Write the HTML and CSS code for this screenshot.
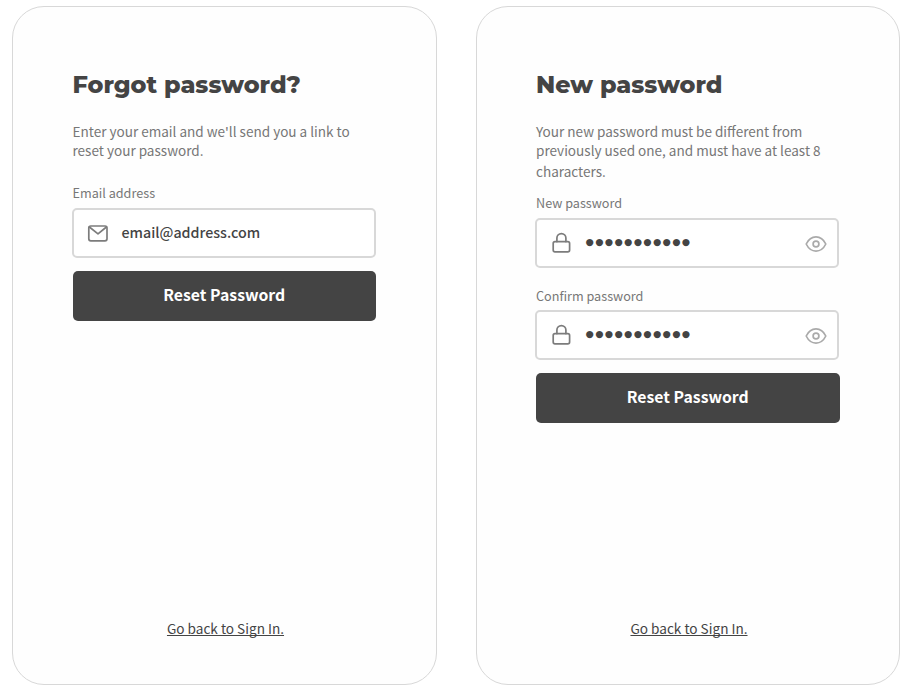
FILE: index.html
```html
<!DOCTYPE html>
<html lang="en">
<head>
<meta charset="utf-8">
<title>Reset password</title>
<link rel="stylesheet" href="styles.css">
</head>
<body>
<svg class="sprite" aria-hidden="true">
  <symbol id="mail" viewBox="0 0 22 22"><rect x="1.8" y="4" width="18.2" height="14.8" rx="2"/><path d="M2.400 5 11 11.800l8.400-6.800"/></symbol>
  <symbol id="lock" viewBox="0 0 22 22"><rect x="3.200" y="9.600" width="16.400" height="10.300" rx="1.800"/><path d="M6.900 9.600V6.100a4.500 4.500 0 0 1 9 0v3.500"/></symbol>
  <symbol id="eye" viewBox="0 0 22 22"><path d="M1.200 12C3.400 7.500 6.700 4.900 11 4.900s7.600 2.600 9.800 7.100c-2.200 4.500-5.500 7.100-9.800 7.100S3.400 16.500 1.200 12Z"/><circle cx="11" cy="12" r="2.900"/></symbol>
</svg>
<main class="screens">
  <section class="card">
    <h1 class="title">Forgot password?</h1>
    <p class="intro intro-short"><span class="line">Enter your email and we'll send you a link to</span><span class="line">reset your password.</span></p>
    <div class="label">Email address</div>
    <div class="field">
      <svg class="icon"><use href="#mail"/></svg>
      <span class="value">email@address.com</span>
    </div>
    <button class="submit">Reset Password</button>
    <a class="back">Go back to Sign In.</a>
  </section>
  <section class="card">
    <h1 class="title">New password</h1>
    <p class="intro"><span class="line">Your new password must be different from</span><span class="line">previously used one, and must have at least 8</span><span class="line">characters.</span></p>
    <div class="label">New password</div>
    <div class="field field-spaced">
      <svg class="icon"><use href="#lock"/></svg>
      <span class="value dots">●●●●●●●●●●●</span>
      <svg class="icon eye"><use href="#eye"/></svg>
    </div>
    <div class="label label-confirm">Confirm password</div>
    <div class="field">
      <svg class="icon"><use href="#lock"/></svg>
      <span class="value dots">●●●●●●●●●●●</span>
      <svg class="icon eye"><use href="#eye"/></svg>
    </div>
    <button class="submit">Reset Password</button>
    <a class="back">Go back to Sign In.</a>
  </section>
</main>
</body>
</html>
```
FILE: styles.css
```css
* { box-sizing: border-box; }
body {
  margin: 0;
  background: #fff;
  font-family: "Source Sans Pro", "Noto Sans CJK JP", "Noto Sans", sans-serif;
  color: #444;
}
.sprite { display: none; }
.screens { display: flex; gap: 39px; padding: 6px 12px; }
.card {
  display: flex;
  flex-direction: column;
  width: 424.500px;
  height: 679px;
  padding: 59px 57px 44px 59.500px;
  border: 1px solid #d8d8d8;
  border-radius: 32px;
  background: #fefefe;
  white-space: nowrap;
}
.title {
  height: 38px;
  margin: 0 0 17px;
  font: 800 23.850px/38px "Montserrat", "Inter", sans-serif;
}
.intro {
  height: 71px;
  margin: 0;
  font-size: 13.560px;
  color: #777;
}
.intro-short { height: 61px; }
.line { display: block; line-height: 20px; }
.line:nth-child(2) { line-height: 18px; }
.line:nth-child(3) { line-height: 24px; }
.label {
  height: 26px;
  padding-top: 1px;
  font-size: 12.650px;
  line-height: 20px;
  color: #777;
}
.label-confirm { height: 25px; }
.field {
  display: flex;
  align-items: center;
  width: 304px;
  height: 50px;
  margin-left: -1px;
  padding: 0 10.500px 0 13px;
  border: 2px solid #d8d8d8;
  border-radius: 5px;
  background: #fff;
}
.field-spaced { margin-bottom: 17px; }
.icon {
  width: 22px;
  height: 22px;
  flex: none;
  fill: none;
  stroke: #7c7c7c;
  stroke-width: 1.700;
  stroke-linejoin: round;
  stroke-linecap: round;
}
.eye { margin-left: auto; stroke: #aaa; }
.value { margin: 0 0 2px 13px; font-size: 14.250px; font-weight: 500; line-height: 20px; }
.dots { margin-left: 13.500px; font-family: "DejaVu Sans", sans-serif; font-size: 9.400px; letter-spacing: 1.450px; }
.submit {
  width: 303.500px;
  height: 49.500px;
  margin: 13px 0 0;
  padding: 0 0 2px;
  border: 0;
  border-radius: 5px;
  background: #444;
  color: #fff;
  font: 700 15.800px/24px "Source Sans Pro", "Noto Sans CJK JP", sans-serif;
}
.back {
  align-self: center;
  margin-top: auto;
  font-size: 13.600px;
  line-height: 24px;
  text-decoration: underline;
  text-decoration-skip-ink: none;
}
```
